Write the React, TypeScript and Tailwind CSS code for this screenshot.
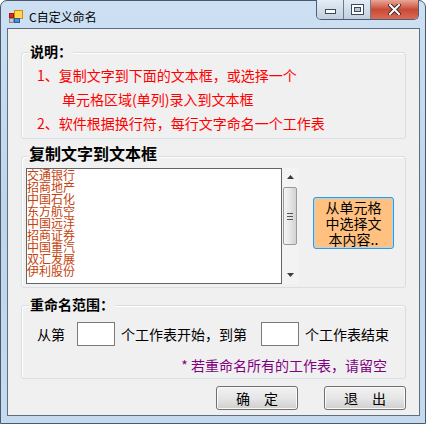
import React from 'react';

const names = ['交通银行', '招商地产', '中国石化', '东方航空', '中国远洋', '招商证券', '中国重汽', '双汇发展', '伊利股份'];

function TitleIcon() {
  return (
    <svg width="14" height="13" viewBox="0 0 14 13" className="shrink-0">
      <rect x="5.5" y="0.5" width="8" height="8" fill="#ffd84a" stroke="#d08a10" />
      <rect x="0.5" y="3.5" width="4" height="4" fill="#e02a1a" stroke="#9a1a10" />
      <rect x="0.5" y="8.5" width="4" height="4" fill="#c8c8c8" stroke="#8a8a8a" />
      <rect x="5.5" y="8.5" width="5" height="4" fill="#4a8ee0" stroke="#2a5ea0" />
    </svg>
  );
}

function CaptionButtons() {
  return (
    <div className="-mt-px flex h-[20px] self-start overflow-hidden rounded-b-[5px] border border-t-0 border-[#4e5f72]">
      <div className="flex w-[27px] items-end justify-center border-r border-[#6a7b8e] bg-gradient-to-b from-[#e4ecf5] via-[#d3deea] to-[#c0cfdf] pb-[5px]">
        <svg width="11" height="5" viewBox="0 0 11 5">
          <rect x="0.5" y="0.5" width="10" height="4" fill="#fff" stroke="#3a4a5c" />
        </svg>
      </div>
      <div className="flex w-[27px] items-center justify-center border-r border-[#6a7b8e] bg-gradient-to-b from-[#e4ecf5] via-[#d3deea] to-[#c0cfdf]">
        <svg width="13" height="11" viewBox="0 0 13 11">
          <rect x="0.5" y="0.5" width="12" height="10" fill="#fff" stroke="#3a4a5c" />
          <rect x="3.5" y="3.5" width="6" height="4" fill="#b8c6d6" stroke="#3a4a5c" />
        </svg>
      </div>
      <div className="flex w-[47px] items-center justify-center bg-gradient-to-b from-[#e8a696] via-[#c94a36] to-[#db6a55]">
        <svg width="13" height="11" viewBox="0 0 13 11">
          <path d="M2 1 L11 10 M11 1 L2 10" stroke="#3a2a2a" strokeWidth="4" strokeLinecap="square" />
          <path d="M2 1 L11 10 M11 1 L2 10" stroke="#fff" strokeWidth="2" strokeLinecap="square" />
        </svg>
      </div>
    </div>
  );
}

function ScrollBar() {
  return (
    <div className="flex h-[116px] w-[16px] flex-col items-center bg-[#f3f3f3]">
      <div className="flex h-[18px] items-center justify-center">
        <svg width="7" height="4" viewBox="0 0 7 4">
          <path d="M0 4 L3.5 0 L7 4 Z" fill="#3c3c3c" />
        </svg>
      </div>
      <div className="mt-px flex h-[58px] w-[14px] flex-col items-center justify-center gap-[2px] rounded-[2px] border border-[#9a9a9a] bg-gradient-to-r from-[#f4f4f4] via-[#e6e6e6] to-[#d2d2d2]">
        <div className="h-px w-[6px] bg-[#555]" />
        <div className="h-px w-[6px] bg-[#555]" />
        <div className="h-px w-[6px] bg-[#555]" />
      </div>
      <div className="flex-1" />
      <div className="flex h-[18px] items-center justify-center">
        <svg width="7" height="4" viewBox="0 0 7 4">
          <path d="M0 0 L3.5 4 L7 0 Z" fill="#3c3c3c" />
        </svg>
      </div>
    </div>
  );
}

function WinButton({ label }: { label: string }) {
  return (
    <button className="flex h-[24px] w-[82px] items-center justify-center rounded-[3px] border border-[#707070] bg-gradient-to-b from-[#f2f2f2] via-[#e6e6e6] to-[#cfcfcf] text-[14px] leading-[16px] text-black shadow-[inset_0_0_0_1px_#fafafa]">
      {label}
    </button>
  );
}

export default function App() {
  return (
    <div className="h-[424px] w-[426px] bg-white font-['Noto_Sans_CJK_SC',sans-serif]">
      <div className="flex h-[424px] w-[426px] flex-col rounded-t-[7px] border border-[#4a5a6c] bg-gradient-to-b from-[#cde0f3] via-[#bed5ec] to-[#c6daef]">
        {/* title bar */}
        <div className="flex h-[27px] shrink-0 items-center pl-[8px] pr-[6px]">
          <div className="mt-[4px] flex items-center">
            <TitleIcon />
            <span className="ml-[6px] text-[12px] leading-[14px] text-black">C自定义命名</span>
          </div>
          <div className="flex-1" />
          <CaptionButtons />
        </div>

        {/* client area */}
        <div className="ml-[6px] mr-[5px] flex h-[388px] flex-col border border-[#5e6f82] bg-[#f0f0f0] px-[13px] pt-[23px]">
          {/* 说明 */}
          <div className="h-[87px] rounded-[3px] border border-[#d5dfe5] shadow-[inset_1px_1px_0_#fff]">
            <div className="-mt-[11px] ml-[7px] w-fit bg-[#f0f0f0] px-px text-[14px] font-bold leading-[18px] text-black">说明：</div>
            <div className="mt-[3px] text-[14px] leading-[24px] text-[#f00]">
              <div className="pl-[15px]">1、复制文字到下面的文本框，或选择一个</div>
              <div className="pl-[40px]">单元格区域(单列)录入到文本框</div>
              <div className="pl-[15px]">2、软件根据换行符，每行文字命名一个工作表</div>
            </div>
          </div>

          {/* 复制文字到文本框 */}
          <div className="mt-[17px] h-[132px] rounded-[3px] border border-[#d5dfe5] shadow-[inset_1px_1px_0_#fff]">
            <div className="-mt-[13px] ml-[6px] w-fit bg-[#f0f0f0] px-px text-[16px] font-bold leading-[18px] text-black">复制文字到文本框</div>
            <div className="ml-[4px] mt-[6px] flex items-start">
              <div className="h-[116px] w-[256px] border border-[#646464] bg-white text-[12px] leading-[12px] text-[#c4420c]">
                {names.map((n) => (
                  <div key={n}>{n}</div>
                ))}
              </div>
              <ScrollBar />
              <button className="ml-[15px] mt-[29px] flex h-[52px] w-[81px] flex-col items-center justify-center rounded-[3px] border border-[#3399dd] bg-[#ffc080] text-[14px] leading-[16px] text-black shadow-[inset_0_0_0_1px_#a8d8f4]">
                <span>从单元格</span>
                <span>中选择文</span>
                <span>本内容..</span>
              </button>
            </div>
          </div>

          {/* 重命名范围 */}
          <div className="mt-[17px] h-[74px] rounded-[3px] border border-[#d5dfe5] shadow-[inset_1px_1px_0_#fff]">
            <div className="-mt-[11px] ml-[7px] w-fit bg-[#f0f0f0] px-px text-[14px] font-bold leading-[18px] text-black">重命名范围：</div>
            <div className="mt-[9px] flex h-[24px] items-center pl-[15px] text-[14px] leading-[16px] text-black">
              <span>从第</span>
              <div className="ml-[12px] h-[24px] w-[38px] border border-[#7a7a7a] bg-white" />
              <span className="ml-[6px]">个工作表开始，到第</span>
              <div className="ml-[14px] h-[24px] w-[38px] border border-[#7a7a7a] bg-white" />
              <span className="ml-[6px]">个工作表结束</span>
            </div>
            <div className="mt-[9px] flex justify-end pr-[18px] text-[14px] leading-[20px] text-[#800080]">
              <span className="whitespace-pre">* 若重命名所有的工作表，请留空</span>
            </div>
          </div>

          {/* buttons */}
          <div className="mt-[7px] flex justify-end gap-[26px]">
            <WinButton label="确　定" />
            <WinButton label="退　出" />
          </div>
        </div>
      </div>
    </div>
  );
}
